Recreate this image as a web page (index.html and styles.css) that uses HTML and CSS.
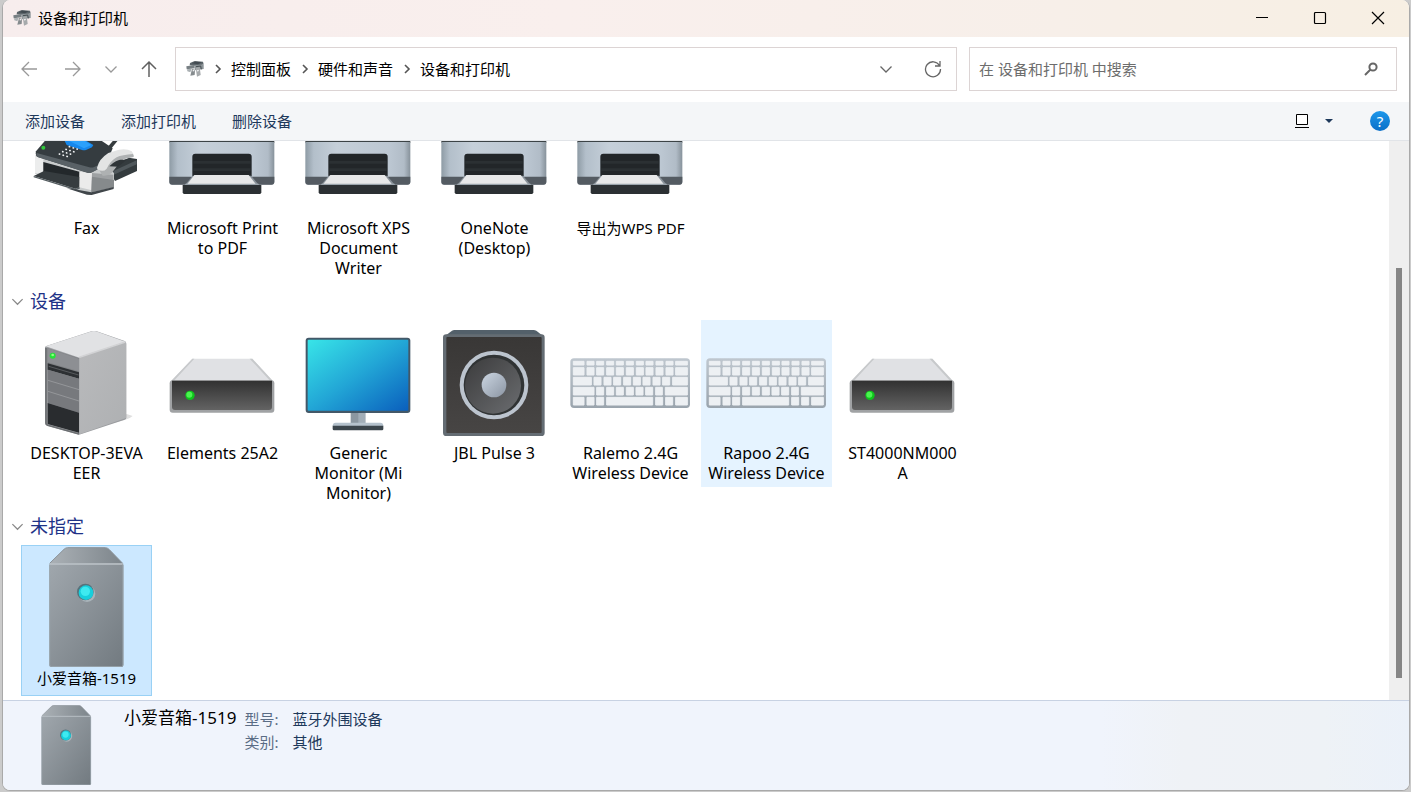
FILE: index.html
```html
<!DOCTYPE html>
<html lang="zh-CN">
<head>
<meta charset="utf-8">
<meta name="viewport" content="width=device-width, initial-scale=1">
<title>设备和打印机</title>
<link rel="stylesheet" href="styles.css">
</head>
<body>
<svg class="defs" width="0" height="0" aria-hidden="true">
  <defs>
    <linearGradient id="gPrinter" x1="0" y1="0" x2="1" y2="0">
      <stop offset="0" stop-color="#8e9ba5"/><stop offset=".08" stop-color="#b3bfca"/><stop offset=".3" stop-color="#c5cfd9"/><stop offset=".8" stop-color="#bcc7d2"/><stop offset=".94" stop-color="#b1bcc7"/><stop offset="1" stop-color="#87929b"/>
    </linearGradient>
    <linearGradient id="gDrive" x1="0" y1="0" x2="0" y2="1">
      <stop offset="0" stop-color="#313131"/><stop offset="1" stop-color="#636363"/>
    </linearGradient>
    <linearGradient id="gScreen" x1="0" y1="0" x2="1" y2="1">
      <stop offset="0" stop-color="#38e5e8"/><stop offset=".5" stop-color="#22a6d6"/><stop offset="1" stop-color="#0a5fbd"/>
    </linearGradient>
    <linearGradient id="gSpeaker" x1="0" y1="0" x2="0" y2="1">
      <stop offset="0" stop-color="#393736"/><stop offset="1" stop-color="#474544"/>
    </linearGradient>
    <linearGradient id="gCone" x1="0" y1="0" x2="1" y2="1">
      <stop offset="0" stop-color="#3b3b3c"/><stop offset="1" stop-color="#6b6d70"/>
    </linearGradient>
    <linearGradient id="gDome" x1="0" y1="0" x2="1" y2="1">
      <stop offset="0" stop-color="#ccd6e2"/><stop offset="1" stop-color="#8b95a3"/>
    </linearGradient>
    <linearGradient id="gTower" x1="0" y1="0" x2="0" y2="1">
      <stop offset="0" stop-color="#77797c"/><stop offset="1" stop-color="#a0a2a5"/>
    </linearGradient>
    <linearGradient id="gSide" x1="0" y1="0" x2="1" y2="1">
      <stop offset="0" stop-color="#b9babc"/><stop offset="1" stop-color="#aeb0b2"/>
    </linearGradient>
    <linearGradient id="gKeys" x1="0" y1="0" x2="0" y2="1">
      <stop offset="0" stop-color="#bfc7cf"/><stop offset="1" stop-color="#9aa4ad"/>
    </linearGradient>
    <linearGradient id="gBox" x1="0" y1="0" x2="1" y2="1">
      <stop offset="0" stop-color="#a0a7ad"/><stop offset="1" stop-color="#727a80"/>
    </linearGradient>
    <linearGradient id="gBoxTop" x1="0" y1="0" x2="1" y2="0">
      <stop offset="0" stop-color="#abb1b6"/><stop offset="1" stop-color="#7d858b"/>
    </linearGradient>

    <symbol id="mini" viewBox="38 34 54 52">
      <path d="M50 42l14-6 25 2 2 8-16 6-26-3z" fill="#5d666b"/>
      <path d="M54 43l12-5 20 2-12 6z" fill="#414a50"/>
      <path d="M39 52l24-4 1 10-24 3z" fill="#777f83"/>
      <path d="M63 49l28-3v14l-26 4z" fill="#8c9498"/>
      <path d="M41 61l14-2-4 11-9-3z" fill="#aab0b3"/>
      <path d="M56 60l9 2-1 16-13 2z" fill="#858b8e"/>
      <path d="M67 56l12-2 3 24-11 5z" fill="#a6aaac"/>
      <path d="M68 53l14-2 2 10" fill="none" stroke="#454d51" stroke-width="3"/>
      <path d="M58 66l5-2M71 66l5-2" stroke="#f4f6f7" stroke-width="4"/>
    </symbol>

    <symbol id="fax" viewBox="78 -114 360 360">
      <path d="M172-60l92-34 32 24-88 54z" fill="#e6e9ec"/>
      <path d="M318 42l42-50 10 4-42 52z" fill="#353b3e"/>
      <path d="M326 104l60-36 25 4v36l-66 30z" fill="#343b3e"/>
      <path d="M340 108l70-32v12l-70 32z" fill="#50585c"/>
      <path d="M105 60l36 6 133 40 52-8 16 16v44l-70 21-52-14-90-45-25-4z" fill="#c9cccd"/>
      <path d="M105 60l25 7v52l-25-5z" fill="#eceded"/>
      <path d="M130 81l108 29v48l-108-38z" fill="#23282b"/>
      <path d="M101 123l31-15 107 18v30l-12 5z" fill="#363c3f"/>
      <path d="M101 123l126 38 12-4v4l-12 5-126-39z" fill="#555d61"/>
      <path d="M239 110l37 4v52l-38-9z" fill="#ebebeb"/>
      <path d="M276 114l64 5v38l-66 14z" fill="#9ea1a3"/>
      <path d="M276 125l66 10v22l-68 15z" fill="#868a8c"/>
      <path d="M200 160l24 3 50 9 67-16v6l-66 18-14-1z" fill="#40464a"/>
      <path d="M108 49l28-33 52-34 100 24 50 34-20 48-42 24q-8 3-18 0L113 66q-8-3-5-17z" fill="#353c40"/>
      <path d="M110 54l158 43q8 2 16-2l40-16-6 12-40 20q-9 4-20 1L113 66q-6-3-3-12z" fill="#596166"/>
      <path d="M190 10h56l34 20-4 7-18 8q-6 2-12 0l-46-15z" fill="#1788ec"/>
      <path d="M192 10h50l32 20-22 10z" fill="#2ba0fb"/>
      <circle cx="130" cy="38" r="6" fill="#30c83c"/>
      <g stroke="#f0f2f3" stroke-width="5" stroke-linecap="round" stroke-dasharray="1 11">
        <path d="M208 35l26 8M198 43l26 8M188 50l26 8M178 57l26 8"/>
      </g>
      <path d="M294 100q6-26 32-42l34-12q22-4 34 4l7 10v6l-38 8-14 22-14 18q-12 10-27 8z" fill="#aeb1b2"/>
      <path d="M291 98q6-26 34-44l32-10q24-4 38 5l5 8q-34 2-50 10-18 10-30 34-10 12-28 2z" fill="#e3e4e4"/>
      <path d="M328 94q22-22 42-20l14-3-30 24z" fill="#2e3437"/>
    </symbol>

    <symbol id="printer" viewBox="486 -114 360 360">
      <path d="M540-100h252v110H540z" fill="#e9ecef"/>
      <path d="M508 8q0-30 14-30h286q15 0 15 30v15H508z" fill="#3c4346"/>
      <path d="M508 21h315v119q0 9-9 9H517q-9 0-9-9z" fill="url(#gPrinter)"/>
      <path d="M508 125h315v15q0 9-9 9H517q-9 0-9-9z" fill="#545b62"/>
      <path d="M577 124V65q0-9 9-9h160q9 0 9 9v59z" fill="#222629"/>
      <path d="M580 82h172M580 104h172" stroke="#2b3033" stroke-width="8"/>
      <path d="M578 122h175l24 28H555z" fill="#89929a"/>
      <path d="M548 150h236v22q0 5-5 5H553q-5 0-5-5z" fill="#2b3033"/>
      <path d="M583 120h163l21 27H562z" fill="#e7e8e9"/>
      <path d="M556 148h220" stroke="#9aa4ac" stroke-width="4"/>
    </symbol>

    <symbol id="tower" viewBox="78 6 360 360">
      <path d="M330 312l50-30 18 6q-8 8-24 12z" fill="#dfdfdf"/>
      <path d="M135 82q0-3 6-5L274 34q8-2 14-1l86 30q5 2 5 8v222q0 4-5 6l-132 44q-5 2-10 0l-90-26q-7-3-7-9z" fill="#9b9da0"/>
      <path d="M137 79L276 34q6-2 12 0l88 31-134 47q-4 2-8 0z" fill="#e1e2e4"/>
      <path d="M238 112l140-46v228l-140 49z" fill="url(#gSide)"/>
      <path d="M238 112l138-46" stroke="#d2d3d5" stroke-width="5"/>
      <path d="M142 84l95 31v226l-95-27z" fill="url(#gTower)"/>
      <path d="M143 85l94 31v38l-94-27z" fill="#8d8f93"/>
      <path d="M143 130l94 27v19l-94-27z" fill="#2d3033"/>
      <path d="M146 139l90 26" stroke="#6d7073" stroke-width="2"/>
      <path d="M144 149l93 27v102l-93-29z" fill="#77797d"/>
      <path d="M144 181l93 28M144 214l93 29" stroke="#a3a5a8" stroke-width="2"/>
      <path d="M143 249l94 29v60l-94-26z" fill="#292c2f"/>
      <path d="M138 84v226q0 4 5 6l94 26" fill="none" stroke="#6c6f72" stroke-width="5"/>
      <circle cx="158" cy="107" r="9" fill="#27e239"/><circle cx="158" cy="105" r="4" fill="#91ff84"/>
    </symbol>

    <symbol id="drive" viewBox="486 6 360 360">
      <path d="M577 116h180l61 66H514z" fill="#e0e1e4"/>
      <path d="M577 116l-63 66h8l61-66zM757 116l61 66h-8l-61-66z" fill="#c7c9cb"/>
      <rect x="509" y="181" width="314" height="97" rx="9" fill="#a0a2a4"/>
      <path d="M516 182h300v79q0 9-9 9H525q-9 0-9-9z" fill="url(#gDrive)"/>
      <circle cx="570" cy="226" r="14" fill="#0fc41c"/><circle cx="568" cy="224" r="9" fill="#4af34f"/>
    </symbol>

    <symbol id="monitor" viewBox="24 6 360 360">
      <path d="M182 276h44v35h-44z" fill="#8b97a1"/>
      <path d="M205 276h21v35h-21z" fill="#a2aeb8"/>
      <path d="M128 318q0-10 9-10h134q9 0 9 10z" fill="#b5c2cd"/>
      <path d="M128 317h152v10q0 4-4 4H132q-4 0-4-4z" fill="#3c464d"/>
      <rect x="47" y="53" width="314" height="226" rx="9" fill="#435868"/>
      <rect x="53" y="59" width="302" height="213" rx="3" fill="url(#gScreen)"/>
    </symbol>

    <symbol id="speaker" viewBox="432 6 360 360">
      <path d="M462 50l24-18q3-2 7-2h238q4 0 8 2l24 19z" fill="#53606a"/>
      <rect x="459" y="43" width="305" height="305" rx="10" fill="#646c73"/>
      <rect x="469" y="51" width="286" height="288" rx="3" fill="url(#gSpeaker)"/>
      <circle cx="612" cy="195" r="103" fill="#bcc4ce"/>
      <circle cx="612" cy="195" r="91" fill="#303334"/>
      <circle cx="609" cy="197" r="84" fill="url(#gCone)"/>
      <circle cx="612" cy="195" r="37" fill="url(#gDome)"/>
    </symbol>

    <symbol id="keyboard" viewBox="30 36 360 360">
      <rect x="31" y="145" width="359" height="149" rx="11" fill="url(#gKeys)"/>
      <g fill="#edf0f3" stroke="#edf0f3" stroke-width="3" stroke-linejoin="round">
        <path d="M40 154h32v11H40zM81 154h21v11H81zM110 154h21v11h-21zM140 154h21v11h-21zM169 154h21v11h-21zM199 154h21v11h-21zM229 154h21v11h-21zM258 154h21v11h-21zM288 154h21v11h-21zM318 154h21v11h-21zM347 154h35v11h-35z"/>
        <path d="M40 173h32v22H40zM81 173h21v22H81zM110 173h21v22h-21zM140 173h21v22h-21zM169 173h21v22h-21zM199 173h21v22h-21zM229 173h21v22h-21zM258 173h21v22h-21zM288 173h21v22h-21zM318 173h21v22h-21zM347 173h35v22h-35z"/>
        <path d="M40 202h54v23H40zM102 202h21v23h-21zM132 202h21v23h-21zM161 202h21v23h-21zM191 202h21v23h-21zM220 202h21v23h-21zM249 202h21v23h-21zM279 202h21v23h-21zM308 202h21v23h-21zM338 202h44v23h-44z"/>
        <path d="M40 232h62v23H40zM110 232h21v23h-21zM140 232h21v23h-21zM169 232h21v23h-21zM199 232h21v23h-21zM228 232h21v23h-21zM257 232h21v23h-21zM287 232h20v23h-20zM316 232h66v23h-66z"/>
        <path d="M40 262h32v23H40zM81 262h21v23H81zM110 262h21v23h-21zM140 262h138v23H140zM287 262h21v23h-21zM317 262h21v23h-21zM347 262h35v23h-35z"/>
      </g>
    </symbol>

    <symbol id="box" viewBox="78 111 360 360">
      <path d="M149 160l43-42q5-5 11-5h113q6 0 11 5l41 42z" fill="url(#gBoxTop)"/>
      <path d="M149 160l43-42q5-5 11-5h113q6 0 11 5l41 42" fill="none" stroke="#8b9298" stroke-width="3"/>
      <rect x="148" y="159" width="222" height="312" rx="6" fill="url(#gBox)"/>
      <path d="M150 162h218" stroke="#bcc3c8" stroke-width="4"/>
      <path d="M149 164v301q0 5 5 5h210q5 0 5-5V164" fill="none" stroke="#9ba6ae" stroke-width="3"/>
      <circle cx="261" cy="251" r="25" fill="#a9b4ba"/>
      <circle cx="256" cy="246" r="25" fill="#56737c"/>
      <circle cx="258" cy="248" r="22" fill="#17cfdc"/>
      <circle cx="256" cy="244" r="14" fill="#3eeaf0"/>
    </symbol>

    <symbol id="crumb" viewBox="0 0 27 18"><path d="M12 5l4 4-4 4" fill="none" stroke="#555" stroke-width="1.6"/></symbol>
    <symbol id="down" viewBox="0 0 14 14"><path d="M1.500 4.500L7 10l5.500-5.500" fill="none" stroke="currentColor" stroke-width="1.300"/></symbol>
  </defs>
</svg>

<div class="window">
  <header class="titlebar">
    <svg class="mini"><use href="#mini"/></svg>
    <h1 class="title">设备和打印机</h1>
    <div class="caption">
      <button type="button" aria-label="最小化"><svg viewBox="0 0 14 14"><path d="M1 6.500h12" stroke="#000"/></svg></button>
      <button type="button" aria-label="最大化"><svg viewBox="0 0 14 14"><rect x="1.500" y="1.500" width="11" height="11" rx="1" fill="none" stroke="#000" stroke-width="1.200"/></svg></button>
      <button type="button" aria-label="关闭"><svg viewBox="0 0 14 14"><path d="M1 1l12 12M13 1L1 13" stroke="#000" stroke-width="1.200"/></svg></button>
    </div>
  </header>

  <nav class="navbar">
    <button class="nav-btn faded" type="button" aria-label="后退"><svg viewBox="0 0 18 18"><path d="M17 9H2M9 2L2 9l7 7" fill="none" stroke="currentColor" stroke-width="1.300"/></svg></button>
    <button class="nav-btn faded" type="button" aria-label="前进"><svg viewBox="0 0 18 18"><path d="M1 9h15M9 2l7 7-7 7" fill="none" stroke="currentColor" stroke-width="1.300"/></svg></button>
    <button class="nav-btn narrow faded" type="button" aria-label="最近位置"><svg class="small"><use href="#down"/></svg></button>
    <button class="nav-btn" type="button" aria-label="上移"><svg viewBox="0 0 18 18"><path d="M9 17V2M2 9l7-7 7 7" fill="none" stroke="currentColor" stroke-width="1.500"/></svg></button>
    <div class="address">
      <svg class="mini"><use href="#mini"/></svg>
      <svg class="crumb"><use href="#crumb"/></svg>
      <a href="#">控制面板</a>
      <svg class="crumb"><use href="#crumb"/></svg>
      <a href="#">硬件和声音</a>
      <svg class="crumb"><use href="#crumb"/></svg>
      <a href="#">设备和打印机</a>
      <div class="address-tools">
        <button type="button" aria-label="以前的位置"><svg class="small"><use href="#down"/></svg></button>
        <button type="button" aria-label="刷新"><svg class="refresh" viewBox="0 0 18 18"><path d="M15.500 5.500A7.500 7.500 0 1 0 16.500 9M16 1v5h-5" fill="none" stroke="currentColor" stroke-width="1.300"/></svg></button>
      </div>
    </div>
    <label class="search">
      <input type="text" placeholder="在 设备和打印机 中搜索" aria-label="搜索">
      <svg viewBox="0 0 14 14"><circle cx="9" cy="5" r="3.600" fill="none" stroke="#666" stroke-width="2"/><path d="M6.500 7.500L1 13" stroke="#666" stroke-width="2"/></svg>
    </label>
  </nav>

  <div class="toolbar">
    <button type="button">添加设备</button>
    <button type="button">添加打印机</button>
    <button type="button">删除设备</button>
    <div class="toolbar-right">
      <button type="button" aria-label="更改视图"><svg class="view" viewBox="0 0 14 14"><path d="M1.500 .5h11v10h-11zM0 13.500h14" fill="#fff" stroke="#000"/></svg></button>
      <button type="button" aria-label="更多选项"><svg class="caret" viewBox="0 0 8 4"><path d="M0 0h8L4 4z" fill="#1e395b"/></svg></button>
      <button class="help" type="button" aria-label="帮助">?</button>
    </div>
  </div>

  <div class="body">
    <main class="content">
      <section>
        <ul class="tiles">
          <li class="tile"><svg class="icon"><use href="#fax"/></svg><span class="label">Fax</span></li>
          <li class="tile"><svg class="icon"><use href="#printer"/></svg><span class="label">Microsoft Print<br>to PDF</span></li>
          <li class="tile"><svg class="icon"><use href="#printer"/></svg><span class="label">Microsoft XPS<br>Document<br>Writer</span></li>
          <li class="tile"><svg class="icon"><use href="#printer"/></svg><span class="label">OneNote<br>(Desktop)</span></li>
          <li class="tile"><svg class="icon"><use href="#printer"/></svg><span class="label han">导出为WPS PDF</span></li>
        </ul>
      </section>
      <section>
        <h2 class="group"><button type="button"><svg><use href="#down"/></svg>设备</button></h2>
        <ul class="tiles">
          <li class="tile"><svg class="icon"><use href="#tower"/></svg><span class="label">DESKTOP-3EVA<br>EER</span></li>
          <li class="tile"><svg class="icon"><use href="#drive"/></svg><span class="label">Elements 25A2</span></li>
          <li class="tile"><svg class="icon"><use href="#monitor"/></svg><span class="label">Generic<br>Monitor (Mi<br>Monitor)</span></li>
          <li class="tile"><svg class="icon"><use href="#speaker"/></svg><span class="label">JBL Pulse 3</span></li>
          <li class="tile"><svg class="icon"><use href="#keyboard"/></svg><span class="label">Ralemo 2.4G<br>Wireless Device</span></li>
          <li class="tile hovered"><svg class="icon"><use href="#keyboard"/></svg><span class="label">Rapoo 2.4G<br>Wireless Device</span></li>
          <li class="tile"><svg class="icon"><use href="#drive"/></svg><span class="label">ST4000NM000<br>A</span></li>
        </ul>
      </section>
      <section>
        <h2 class="group"><button type="button"><svg><use href="#down"/></svg>未指定</button></h2>
        <ul class="tiles">
          <li class="tile selected"><svg class="icon"><use href="#box"/></svg><span class="label han">小爱音箱-1519</span></li>
        </ul>
      </section>
    </main>
    <div class="scrollbar"><div class="thumb"></div></div>
  </div>

  <footer class="details">
    <svg class="preview"><use href="#box"/></svg>
    <strong class="name">小爱音箱-1519</strong>
    <dl class="props">
      <dt>型号:</dt><dd>蓝牙外围设备</dd>
      <dt>类别:</dt><dd>其他</dd>
    </dl>
  </footer>
</div>
</body>
</html>
```
FILE: styles.css
```css
* {
  box-sizing: border-box;
}

body {
  margin: 0;
  height: 100vh;
  padding: 0 1px 1px 2px;
  background: #cbcbcb;
  color: #000;
  font: 15px/20px "Noto Sans", "Noto Sans CJK SC", sans-serif;
}

button {
  padding: 0;
  border: 0;
  background: none;
  color: inherit;
  font: inherit;
}

svg {
  display: block;
  flex: none;
}

.defs {
  position: absolute;
}

.window {
  display: flex;
  flex-direction: column;
  height: 100%;
  border: 1px solid #a9a9a9;
  border-top: 0;
  border-radius: 8px;
  background: #fff;
  overflow: hidden;
}

.mini {
  width: 18px;
  height: 18px;
}

/* Title bar */
.titlebar {
  display: flex;
  align-items: center;
  flex: none;
  height: 37px;
  padding: 0 2px 2px 10px;
  gap: 7px;
  background: linear-gradient(90deg, #f7eded, #f9efed 40%, #f7efe9 75%, #f7efe3);
}

.title {
  margin: 0;
  font-size: 15px;
  font-weight: 400;
}

.caption {
  display: flex;
  margin-left: auto;
  height: 100%;
}

.caption button {
  display: grid;
  place-items: center;
  width: 58px;
}

.caption svg {
  width: 14px;
  height: 14px;
}

/* Navigation */
.navbar {
  display: flex;
  align-items: center;
  flex: none;
  height: 65px;
  padding: 0 12px 2px 8px;
  gap: 8px;
}

.nav-btn {
  display: grid;
  place-items: center;
  flex: none;
  width: 36px;
  height: 36px;
  color: #606060;
}

.nav-btn.narrow {
  width: 24px;
}

.nav-btn.faded {
  color: #999;
}

.nav-btn svg,
.refresh {
  width: 18px;
  height: 18px;
}

.nav-btn .small,
.small {
  width: 14px;
  height: 14px;
}

.address,
.search {
  display: flex;
  align-items: center;
  height: 44px;
  min-width: 0;
  border: 1px solid #dcd4d4;
  background: #fff;
}

.address {
  flex: 1;
  padding-left: 10px;
  white-space: nowrap;
}

.address a {
  color: #000;
  text-decoration: none;
}

.crumb {
  width: 27px;
  height: 18px;
}

.address-tools {
  display: flex;
  margin-left: auto;
  color: #666;
}

.address-tools button {
  display: grid;
  place-items: center;
  width: 47px;
  height: 42px;
}

.search {
  flex: 0 1 428px;
  margin-left: 4px;
  padding: 0 18px 0 9px;
}

.search input {
  flex: 1;
  min-width: 0;
  padding: 0;
  border: 0;
  outline: 0;
  background: none;
  color: #000;
  font: inherit;
}

.search input::placeholder {
  color: #6d6d6d;
  opacity: 1;
}

.search svg {
  width: 14px;
  height: 14px;
}

/* Commands */
.toolbar {
  display: flex;
  align-items: center;
  flex: none;
  height: 39px;
  padding: 0 19px 0 22px;
  gap: 36px;
  border-bottom: 1px solid #e1e4e8;
  background: #f4f6f8;
  color: #1e395b;
}

.toolbar-right {
  display: flex;
  align-items: center;
  margin-left: auto;
  gap: 16px;
}

.view {
  width: 14px;
  height: 14px;
}

.caret {
  width: 8px;
  height: 4px;
}

.help {
  width: 20px;
  height: 20px;
  margin-left: 21px;
  border-radius: 50%;
  background: linear-gradient(#1c97ea, #0a6fc8);
  color: #fff;
}

/* Device list, scrolled to its end */
.body {
  display: flex;
  flex: 1;
  min-height: 0;
}

.content {
  display: flex;
  flex: 1;
  flex-direction: column;
  justify-content: flex-end;
  min-width: 0;
  padding: 0 8px 4px;
  overflow: hidden;
}

.group {
  margin: 0;
  color: #1e3287;
  font-size: 18px;
  font-weight: 400;
  line-height: 38px;
}

.group button {
  display: flex;
  align-items: center;
  gap: 6px;
}

.group svg {
  width: 13px;
  height: 13px;
  color: #888;
}

.tiles {
  display: flex;
  flex-wrap: wrap;
  align-items: flex-start;
  gap: 5px;
  margin: 0;
  padding: 0 0 0 10px;
  list-style: none;
}

.tile {
  width: 131px;
  min-height: 151px;
  padding: 1px 0 3px;
  border: 1px solid transparent;
}

.tile.hovered {
  border-color: #e5f3ff;
  background: #e5f3ff;
}

.tile.selected {
  border-color: #99d1f5;
  background: #cce8ff;
}

.icon {
  width: 120px;
  height: 120px;
  margin: 0 0 1px 4px;
}

.label {
  display: block;
  font-size: 16px;
  text-align: center;
}

.label.han {
  font-size: 15px;
}

.scrollbar {
  display: flex;
  flex: none;
  justify-content: center;
  width: 20px;
  padding: 127px 0 22px;
  background: #efefef;
}

.thumb {
  width: 6px;
  background: #868686;
}

/* Details pane */
.details {
  display: flex;
  flex: none;
  align-items: flex-start;
  height: 90px;
  padding: 4px 22px 0 23px;
  border-top: 1px solid #c8d2e3;
  background: linear-gradient(90deg, #f0f4fc 78%, #eff2f6 84%, #eef2f6 94%, #ebf1f9);
}

.preview {
  width: 80px;
  height: 80px;
}

.name {
  margin: 3px 8px 0 18px;
  font-size: 17px;
  font-weight: 400;
}

.props {
  display: grid;
  grid-template-columns: auto auto;
  gap: 3px 14px;
  margin: 4px 0 0;
}

.props dt {
  color: #5a6c85;
}

.props dd {
  margin: 0;
  color: #1e395b;
}
```
